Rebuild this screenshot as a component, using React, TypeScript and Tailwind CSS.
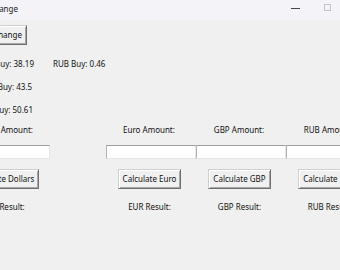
import React from "react";

const font = { fontFamily: '"Noto Sans", "Open Sans", sans-serif' };

function TkButton({ children }: { children: React.ReactNode }) {
  return (
    <button className="h-[20px] shrink-0 whitespace-nowrap px-[4px] bg-[#f0f0f0] border border-t-[#cfcfcf] border-l-[#cfcfcf] border-r-[#6f6f6f] border-b-[#6f6f6f] text-[8px] leading-none text-[#111] shadow-[inset_1px_1px_0_#ffffff,inset_-1px_-1px_0_#a8a8a8]">
      {children}
    </button>
  );
}

function Entry() {
  return (
    <div className="h-[14px] w-[90px] bg-white border-t border-l border-t-[#9c9c9c] border-l-[#b4b4b4] border-r border-b border-r-[#e6e6e6] border-b-[#e6e6e6]" />
  );
}

export default function App() {
  const cols = ["Dollar", "Euro", "GBP", "RUB"];
  const btns = ["Calculate Dollars", "Calculate Euro", "Calculate GBP", "Calculate RUB"];
  const results = ["USD Result:", "EUR Result:", "GBP Result:", "RUB Result:"];
  return (
    <div
      className="w-[340px] h-[270px] overflow-hidden bg-[#f0f0f0] text-[8px] text-[#111] flex flex-col"
      style={font}
    >
      {/* title bar */}
      <div className="h-[20px] shrink-0 bg-[#f3f3f8] flex items-center">
        <div className="w-[18px] flex justify-end">
          <span className="shrink-0 whitespace-nowrap text-[8px] text-[#222] -mt-[2px]">
            Currency Exchange
          </span>
        </div>
        <div className="flex-1" />
        <div className="w-[9px] h-px bg-[#444] -mt-[3px]" />
        <div className="w-[24px]" />
        <div className="w-[7px] h-[7px] border border-[#c4c4c4] -mt-[6px]" />
        <div className="w-[9px]" />
      </div>

      {/* content */}
      <div className="ml-[-100px] w-[476px] flex flex-col">
        <div className="mt-[5px] w-[127px] flex justify-end">
          <TkButton>Change</TkButton>
        </div>

        <div className="mt-[7px] flex flex-col">
          <div className="h-[23px] flex items-center">
            <div className="w-[134px] flex justify-end">
              <span className="shrink-0 whitespace-nowrap">USD Buy: 38.19</span>
            </div>
            <span className="ml-[19px] whitespace-nowrap">RUB Buy: 0.46</span>
          </div>
          <div className="h-[23px] flex items-center">
            <div className="w-[132px] flex justify-end">
              <span className="shrink-0 whitespace-nowrap">EUR Buy: 43.5</span>
            </div>
          </div>
          <div className="h-[23px] flex items-center">
            <div className="w-[133px] flex justify-end">
              <span className="shrink-0 whitespace-nowrap">GBP Buy: 50.61</span>
            </div>
          </div>
        </div>

        <div className="grid grid-cols-[206px_90px_90px_90px]">
          {cols.map((c, i) => (
            <div
              key={c}
              className={
                i === 0
                  ? "h-[18px] flex items-center justify-center whitespace-nowrap pl-[3px]"
                  : "h-[18px] flex items-center justify-center whitespace-nowrap pr-[4px]"
              }
            >
              {c} Amount:
            </div>
          ))}
          {cols.map((c, i) => (
            <div
              key={c + "e"}
              className={
                i === 0
                  ? "mt-[6px] flex justify-center pl-[3px]"
                  : "mt-[6px] flex justify-center"
              }
            >
              <Entry />
            </div>
          ))}
          {btns.map((b, i) => (
            <div
              key={b}
              className={
                i === 0
                  ? "mt-[10px] flex justify-center"
                  : "mt-[10px] flex justify-center pr-[3px]"
              }
            >
              <TkButton>{b}</TkButton>
            </div>
          ))}
          {results.map((r, i) => (
            <div
              key={r}
              className={
                i === 0
                  ? "mt-[11px] h-[14px] flex items-center justify-center whitespace-nowrap"
                  : "mt-[11px] h-[14px] flex items-center justify-center whitespace-nowrap pr-[3px]"
              }
            >
              {r}
            </div>
          ))}
        </div>
      </div>
    </div>
  );
}
